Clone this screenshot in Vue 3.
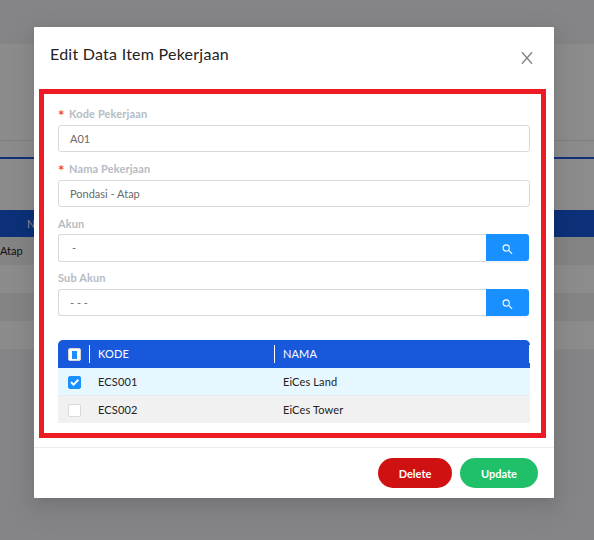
<script setup>
import { ref } from 'vue'

const fields = ref([
  { label: 'Kode Pekerjaan', value: 'A01', required: true },
  { label: 'Nama Pekerjaan', value: 'Pondasi - Atap', required: true },
  { label: 'Akun', value: '-', search: true, indent: true, tall: true },
  { label: 'Sub Akun', value: '- - -', search: true },
])
const rows = ref([
  { code: 'ECS001', name: 'EiCes Land', checked: true },
  { code: 'ECS002', name: 'EiCes Tower', checked: false },
])
</script>

<template>
  <div class="screen">
    <div class="page">
      <div class="page-top"></div>
      <div class="page-panel"></div>
      <div class="page-tabs"></div>
      <div class="page-head"><span>NAMA</span></div>
      <div class="page-row odd">Atap</div>
      <div class="page-row"></div>
      <div class="page-row odd"></div>
      <div class="page-row"></div>
    </div>
    <div class="mask">
      <section class="modal">
        <header class="modal-head">
          <h1>Edit Data Item Pekerjaan</h1>
          <svg class="close" viewBox="0 0 12 12"><path d="M1 .3 11 11.7M11 .3 1 11.7" /></svg>
        </header>
        <div class="frame">
          <div v-for="f in fields" :key="f.label" class="field" :class="{ tall: f.tall }">
            <label><span v-if="f.required" class="star">*</span><span>{{ f.label }}</span></label>
            <div class="control" :class="{ grouped: f.search }">
              <div class="input" :class="{ indent: f.indent }">{{ f.value }}</div>
              <button v-if="f.search" class="search">
                <svg viewBox="0 0 12 12"><circle cx="4.6" cy="4.3" r="3.4" /><path d="M7.2 6.9 11 10.7" /></svg>
              </button>
            </div>
          </div>
          <div class="table">
            <div class="tr th">
              <div class="cell pick"><span class="box partial"></span></div>
              <div class="cell code">KODE</div>
              <div class="cell last">NAMA</div>
            </div>
            <div v-for="r in rows" :key="r.code" class="tr" :class="{ selected: r.checked }">
              <div class="cell pick">
                <span class="box" :class="{ checked: r.checked }">
                  <svg v-if="r.checked" viewBox="0 0 13 13"><path d="M3 6.1 5.5 8.6 10.4 3.7" /></svg>
                </span>
              </div>
              <div class="cell code">{{ r.code }}</div>
              <div class="cell">{{ r.name }}</div>
            </div>
          </div>
        </div>
        <footer class="modal-foot">
          <button class="pill delete">Delete</button>
          <button class="pill update">Update</button>
        </footer>
      </section>
    </div>
  </div>
</template>

<style>
body { margin: 0; overflow: hidden; }
</style>

<style scoped>
* { box-sizing: border-box; }
.screen { display: grid; width: 594px; height: 540px; overflow: hidden; font-family: Lato, sans-serif; font-size: 11px; background: #f2f3f7; }
.page, .mask { grid-area: 1 / 1; min-width: 0; min-height: 0; }
.page-top { height: 44px; }
.page-panel { height: 97px; background: #fff; border-bottom: 1px solid #e8e8e8; }
.page-tabs { height: 69px; background: linear-gradient(#1a5ade, #1a5ade) 0 16px / 100% 2px no-repeat #fff; }
.page-head { height: 27px; padding-left: 27px; line-height: 28px; background: #1859dc; color: #fff; }
.page-row { height: 28px; line-height: 28px; background: #fff; color: #222; font-size: 11px; }
.page-row.odd { background: #f1f1f1; }
.mask { z-index: 1; padding: 27px 40px 42px 34px; background: rgba(0, 0, 0, 0.45); }
.modal { display: flex; flex-direction: column; width: 520px; height: 471px; background: #fff; border-radius: 1px; box-shadow: 0 3px 6px -4px rgba(0, 0, 0, 0.12), 0 6px 16px rgba(0, 0, 0, 0.08), 0 9px 28px 8px rgba(0, 0, 0, 0.05); }
.modal-head { display: flex; justify-content: space-between; height: 62px; padding: 16px 21px 0 16px; }
h1 { margin: 0; font-size: 16px; font-weight: 400; line-height: 22px; letter-spacing: 0.25px; color: #222; }
.close { width: 12px; height: 12px; margin-top: 9px; fill: none; stroke: #808080; stroke-width: 1.4; }
.frame { width: 507px; height: 349px; margin-left: 5px; padding: 12px 11px 0 14px; border: 5px solid #ef1b24; }
.field { height: 55px; }
.field.tall { height: 55px; margin-top: -1px; }
label { display: flex; height: 19px; line-height: 16px; font-weight: 700; font-size: 11px; letter-spacing: 0.13px; color: #b5bbc4; }
.tall label { line-height: 18px; }
.star { width: 11px; color: #ff3b3e; font-size: 15px; line-height: 19px; font-weight: 700; }
.control { display: flex; height: 27px; }
.input { flex: 1; padding: 0 11px; border: 1px solid #d9d9d9; border-radius: 3px; line-height: 26px; color: #6a6a6a; }
.input.indent { padding-left: 13px; }
.grouped { padding-right: 1px; }
.grouped .input { border-right: 0; border-radius: 3px 0 0 3px; }
.tall .control { height: 28px; }
.search { display: flex; align-items: center; justify-content: center; width: 43px; height: 27px; padding: 3px 0 0; border: 0; border-radius: 0 3px 3px 0; background: #1890ff; box-shadow: 0 2px 0 rgba(0, 0, 0, 0.04); }
.tall .search { padding-top: 4px; }
.search svg { width: 11px; height: 11px; fill: none; stroke: #fff; stroke-width: 1.2; }
.table { margin-top: 15px; border-radius: 5px 5px 0 0; overflow: hidden; }
.tr { display: grid; grid-template-columns: 32px 185px 1fr; height: 27px; background: #f1f1f1; color: #222; line-height: 28px; font-size: 11px; letter-spacing: 0.13px; }
.tr.th { height: 28px; background: #1859dc; color: #fff; }
.tr.selected { height: 28px; background: #e6f7ff; border-bottom: 1px solid #e6ebef; }
.cell { padding-left: 8px; }
.th .cell { background: linear-gradient(#fff, #fff) right 5px / 1px 18px no-repeat; }
.pick { display: flex; align-items: center; padding-left: 10px; }
.box { display: flex; align-items: center; justify-content: center; width: 13px; height: 13px; margin-top: 1px; border: 1px solid #d9d9d9; border-radius: 2px; background: #fff; }
.box.checked { border-color: #1890ff; background: #1890ff; }
.box svg { flex: none; width: 13px; height: 13px; fill: none; stroke: #fff; stroke-width: 2; }
.partial::after { content: ''; width: 5px; height: 8px; background: #1890ff; }
.modal-foot { display: flex; justify-content: flex-end; gap: 8px; height: 51px; margin-top: 9px; padding: 10px 16px 0; border-top: 1px solid #ececec; }
.pill { height: 30px; padding: 1px 0 0; border: 0; border-radius: 15px; font: 700 11px Lato, sans-serif; color: #fff; }
.delete { width: 74px; background: #cf1111; }
.update { width: 78px; background: #20c06b; }
</style>
